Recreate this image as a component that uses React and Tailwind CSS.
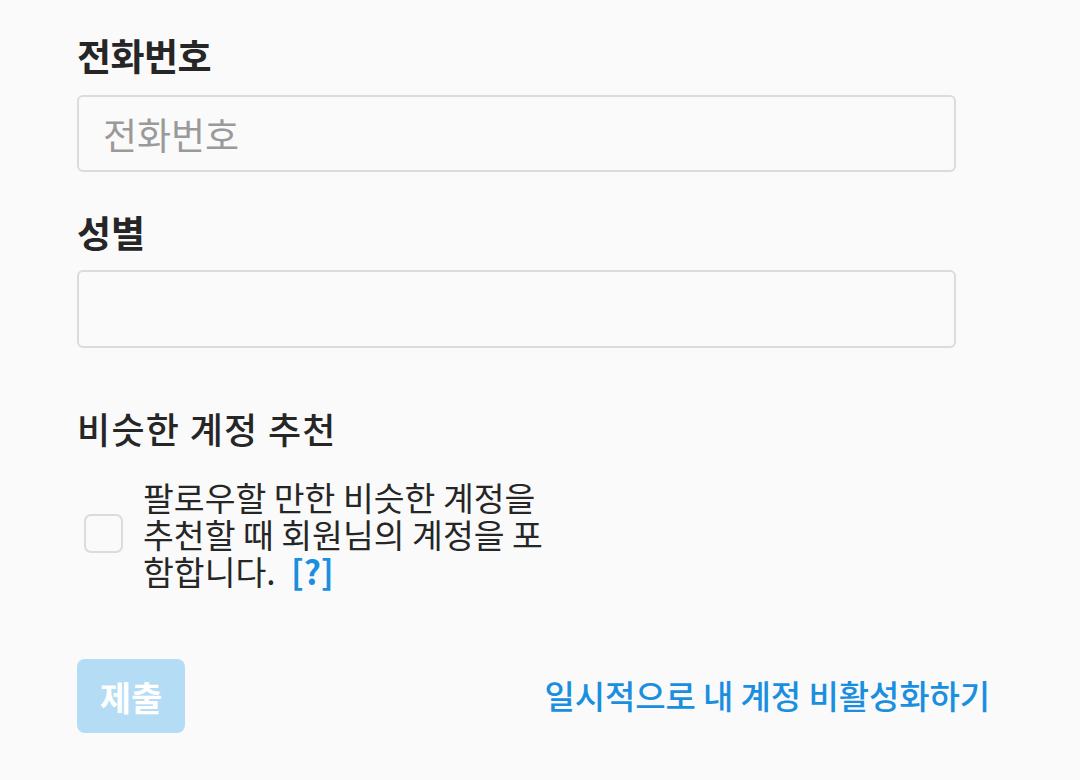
import { useState } from 'react';

const font = { fontFamily: '"Noto Sans CJK KR", "Noto Sans", sans-serif' };

export default function App() {
  const [phone, setPhone] = useState('');
  const [checked, setChecked] = useState(false);

  return (
    <div className="min-h-[780px] w-[1080px] bg-[#fafafa] text-[#262626]" style={font}>
      <div className="w-[879px] ml-[77px] pt-[30px]">
        {/* 전화번호 */}
        <label className="block text-[37px] font-bold leading-[50px] tracking-[-0.5px]">전화번호</label>
        <input
          type="text"
          value={phone}
          onChange={(e) => setPhone(e.target.value)}
          placeholder="전화번호"
          className="mt-[15px] block h-[77px] w-full rounded-[6px] border-2 border-[#dbdbdb] bg-[#fafafa] px-6 text-[37px] outline-none placeholder:text-[#9a9a9a]"
        />

        {/* 성별 */}
        <label className="mt-[35px] block text-[37px] font-bold leading-[50px]">성별</label>
        <input
          type="text"
          className="mt-[13px] block h-[78px] w-full rounded-[6px] border-2 border-[#dbdbdb] bg-[#fafafa] px-6 text-[37px] outline-none"
        />

        {/* 비슷한 계정 추천 */}
        <div className="mt-[55px] text-[36px] font-medium leading-[50px] tracking-[1.3px]">비슷한 계정 추천</div>
        <div className="mt-[25px] flex items-center">
          <button
            onClick={() => setChecked(!checked)}
            className="ml-[7px] h-[39px] w-[39px] shrink-0 rounded-[7px] border-2 border-[#dbdbdb] bg-[#fafafa]"
          />
          <p className="ml-[20px] w-[405px] text-[33.5px] leading-[37px]">
            팔로우할 만한 비슷한 계정을 추천할 때 회원님의 계정을 포함합니다.{' '}
            <a className="ml-2 font-bold leading-[37px] text-[#1a8fe0]">[?]</a>
          </p>
        </div>

        {/* 하단 */}
        <div className="mt-[70px] flex items-center justify-between">
          <button className="h-[74px] w-[108px] rounded-[8px] bg-[#b5dcf5] text-[34px] font-bold text-white">
            제출
          </button>
          <a className="-mr-[34px] text-[33px] font-medium tracking-[-0.1px] text-[#1a8fe0]">
            일시적으로 내 계정 비활성화하기
          </a>
        </div>
      </div>
    </div>
  );
}
